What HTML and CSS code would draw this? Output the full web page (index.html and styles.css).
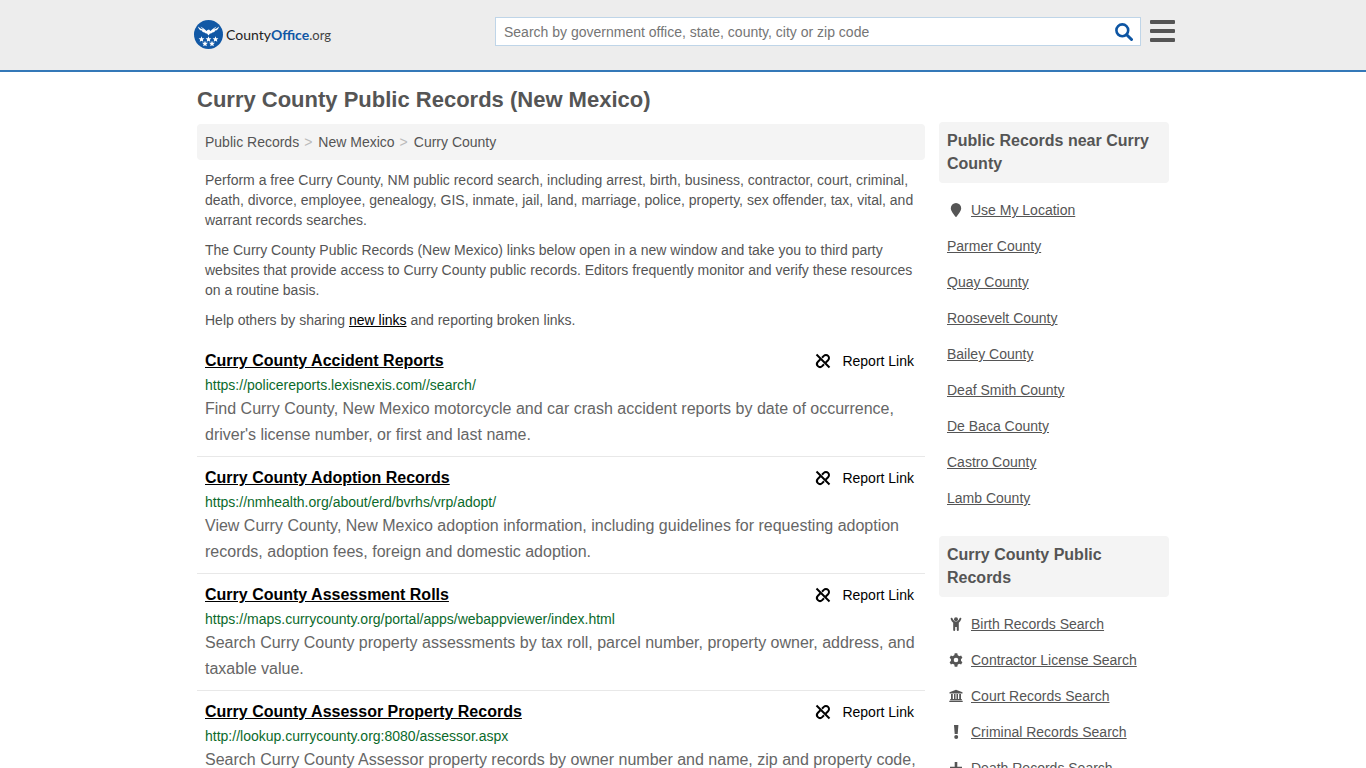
FILE: index.html
```
<!DOCTYPE html>
<html lang="en">
<head>
  <meta charset="UTF-8" />
  <meta name="viewport" content="width=device-width, initial-scale=1.0" />
  <title>Curry County Public Records (New Mexico)</title>
  <link rel="stylesheet" href="styles.css">
</head>
<body>

  <!-- shared icons -->
  <svg class="sprite" aria-hidden="true">
    <symbol id="unlink" viewBox="0 0 16 16">
      <g fill="none" stroke="currentColor" stroke-width="2" stroke-linecap="butt" stroke-linejoin="round">
        <path d="M1.500 1.500l13 13" />
        <path d="M7 4.700L8.800 2.900a3 3 0 0 1 4.300 4.300L10.600 9.700" />
        <path d="M9 11.300L7.200 13.100a3 3 0 0 1-4.300-4.300L5.400 6.300" />
      </g>
    </symbol>
  </svg>

  <header class="header">
    <div class="header-inner">
      <a class="logo" href="#" aria-label="CountyOffice.org">
        <svg class="logo-mark" viewBox="0 0 58 58" aria-hidden="true">
          <circle cx="29" cy="29" r="29" fill="#1158a5" />
          <g fill="#fff">
            <path d="M8 13c3 3 7 5 11 6-3-2-5-4-6-6 4 3 9 5 12 9l2-2 3-1 3 3c3-4 8-6 12-9-1 2-3 4-6 6 4-1 8-3 11-6-1 4-3 7-6 8h-2c0 2-2 4-5 4-2 2-4 2-5 2l-3 4-3-4c-1 0-3 0-5-2-3 0-5-2-5-4h-2c-3-1-5-4-6-8z" />
            <path id="star" d="M15 32.500l1.600 3.900 4.200.3-3.200 2.700 1 4.100-3.600-2.200-3.600 2.200 1-4.100-3.200-2.700 4.200-.3z" />
            <use href="#star" x="14" />
            <use href="#star" x="28" />
            <use href="#star" x="7" y="9" />
            <use href="#star" x="21" y="9" />
          </g>
        </svg>
        <span class="logo-text">County<b>Office</b><span class="logo-tld">.org</span></span>
      </a>
      <form class="search">
        <input type="text" aria-label="Search" placeholder="Search by government office, state, county, city or zip code" />
        <button type="submit" aria-label="Search">
          <svg viewBox="0 0 18 18" width="18" height="18"><circle cx="7.300" cy="7.300" r="5.900" fill="none" stroke="#0d55a3" stroke-width="2.600" /><path d="M11.700 11.700l4.800 4.800" stroke="#0d55a3" stroke-width="3" stroke-linecap="round" /></svg>
        </button>
      </form>
      <button class="menu" type="button" aria-label="Menu"><span></span><span></span><span></span></button>
    </div>
  </header>

  <div class="container">
    <main class="main">
      <h1>Curry County Public Records (New Mexico)</h1>
      <nav class="breadcrumbs">
        <a href="#">Public Records</a><i>&gt;</i><a href="#">New Mexico</a><i>&gt;</i><a href="#">Curry County</a>
      </nav>
      <div class="intro">
        <p>Perform a free Curry County, NM public record search, including arrest, birth, business, contractor, court, criminal, death, divorce, employee, genealogy, GIS, inmate, jail, land, marriage, police, property, sex offender, tax, vital, and warrant records searches.</p>
        <p>The Curry County Public Records (New Mexico) links below open in a new window and take you to third party websites that provide access to Curry County public records. Editors frequently monitor and verify these resources on a routine basis.</p>
        <p>Help others by sharing <a href="#">new links</a> and reporting broken links.</p>
      </div>

      <article class="record">
        <div class="record-head">
          <h2><a href="#">Curry County Accident Reports</a></h2>
          <a class="report" href="#"><svg width="16" height="16"><use href="#unlink" /></svg>Report Link</a>
        </div>
        <div class="record-url">https://policereports.lexisnexis.com//search/</div>
        <p>Find Curry County, New Mexico motorcycle and car crash accident reports by date of occurrence, driver's license number, or first and last name.</p>
      </article>

      <article class="record">
        <div class="record-head">
          <h2><a href="#">Curry County Adoption Records</a></h2>
          <a class="report" href="#"><svg width="16" height="16"><use href="#unlink" /></svg>Report Link</a>
        </div>
        <div class="record-url">https://nmhealth.org/about/erd/bvrhs/vrp/adopt/</div>
        <p>View Curry County, New Mexico adoption information, including guidelines for requesting adoption records, adoption fees, foreign and domestic adoption.</p>
      </article>

      <article class="record">
        <div class="record-head">
          <h2><a href="#">Curry County Assessment Rolls</a></h2>
          <a class="report" href="#"><svg width="16" height="16"><use href="#unlink" /></svg>Report Link</a>
        </div>
        <div class="record-url">https://maps.currycounty.org/portal/apps/webappviewer/index.html</div>
        <p>Search Curry County property assessments by tax roll, parcel number, property owner, address, and taxable value.</p>
      </article>

      <article class="record">
        <div class="record-head">
          <h2><a href="#">Curry County Assessor Property Records</a></h2>
          <a class="report" href="#"><svg width="16" height="16"><use href="#unlink" /></svg>Report Link</a>
        </div>
        <div class="record-url">http://lookup.currycounty.org:8080/assessor.aspx</div>
        <p>Search Curry County Assessor property records by owner number and name, zip and property code,</p>
      </article>
    </main>

    <aside class="sidebar">
      <h2>Public Records near Curry County</h2>
      <ul>
        <li><svg viewBox="0 0 14 14"><path d="M7 0a5.200 5.200 0 0 1 5.200 5.200C12.200 8 9 11.500 7.700 13.600a.8.8 0 0 1-1.400 0C5 11.500 1.800 8 1.800 5.200A5.200 5.200 0 0 1 7 0z" /></svg><a href="#">Use My Location</a></li>
        <li><a href="#">Parmer County</a></li>
        <li><a href="#">Quay County</a></li>
        <li><a href="#">Roosevelt County</a></li>
        <li><a href="#">Bailey County</a></li>
        <li><a href="#">Deaf Smith County</a></li>
        <li><a href="#">De Baca County</a></li>
        <li><a href="#">Castro County</a></li>
        <li><a href="#">Lamb County</a></li>
      </ul>

      <h2>Curry County Public Records</h2>
      <ul>
        <li><svg viewBox="0 0 14 14"><circle cx="7" cy="2.200" r="2" /><path d="M2.100.8a.9.900 0 0 1 1.200.3C4 2.700 5 4.600 7 4.600s3-1.900 3.700-3.500a.9.900 0 0 1 1.600.8C11.600 3.500 10.900 4.900 9.800 5.700V13a1 1 0 0 1-2 0v-3H6.200v3a1 1 0 0 1-2 0V5.700C3.100 4.900 2.400 3.500 1.700 1.900a.9.900 0 0 1 .4-1.100z" /></svg><a href="#">Birth Records Search</a></li>
        <li><svg viewBox="0 0 14 14"><circle cx="7" cy="7" r="3.700" fill="none" stroke="#555" stroke-width="2.800" /><path d="M5.700.3h2.600l.5 2.400H5.200zM5.700 13.700h2.600l.5-2.400H5.200zM12.100 2.600l1.300 2.200-1.800 1.700-1.800-3.100zM1.900 2.600L.6 4.800l1.800 1.700 1.800-3.100zM12.100 11.400l1.300-2.200-1.800-1.700-1.800 3.100zM1.900 11.400L.6 9.200l1.800-1.700 1.800 3.100z" /></svg><a href="#">Contractor License Search</a></li>
        <li><svg viewBox="0 0 14 14"><path d="M7 .8l6.500 2.400v1.300H.5V3.200zM2 5h1.800v5.500H2zM5 5h1.500v5.500H5zM7.500 5H9v5.500H7.500zM10.200 5H12v5.500h-1.800zM1.200 10h11.600v1.300H1.200zM.3 11.700h13.400v1.300H.3z" /></svg><a href="#">Court Records Search</a></li>
        <li><svg viewBox="0 0 14 14"><path d="M5 0h4.400l-.7 9H5.700z" /><circle cx="7.200" cy="12" r="2" /></svg><a href="#">Criminal Records Search</a></li>
        <li><svg viewBox="0 0 14 14"><path d="M5.700 1h2.600v4.700H13v2.600H8.300V13H5.700V8.300H1V5.700h4.700z" /></svg><a href="#">Death Records Search</a></li>
      </ul>
    </aside>
  </div>

</body>
</html>
```
FILE: styles.css
```
* {
  box-sizing: border-box;
}

body {
  margin: 0;
  font-family: "Liberation Sans", Arial, sans-serif;
  font-size: 14px;
  line-height: 20px;
  color: #555;
  background: #fff;
}

h1, h2, p, ul {
  margin: 0;
  padding: 0;
}

a {
  color: inherit;
}

.sprite {
  display: none;
}

.header {
  background: #ededed;
  border-bottom: 2px solid #3478b8;
}

.header-inner {
  display: flex;
  align-items: flex-start;
  max-width: 984px;
  margin: 0 auto;
  padding: 17px 0 21px 3px;
}

.logo {
  display: flex;
  align-items: center;
  gap: 3px;
  width: 301px;
  padding-top: 3px;
  text-decoration: none;
}

.logo-mark {
  width: 29px;
  height: 29px;
}

.logo-text {
  font-family: Lato, sans-serif;
  font-size: 14px;
  color: #222;
}

.logo-text b {
  color: #1158a5;
}

.logo-tld {
  font-size: 13px;
  color: #444;
}

.search {
  display: flex;
  flex: 1;
  height: 29px;
  background: #fff;
  border: 1px solid #bfd5e8;
}

.search input {
  flex: 1;
  min-width: 0;
  padding: 0 8px;
  border: none;
  outline: none;
  background: none;
  font-family: inherit;
  font-size: 14px;
  color: #555;
}

.search input::placeholder {
  color: #757575;
}

.search button {
  display: flex;
  align-items: center;
  padding: 0 7px;
  border: none;
  background: none;
  cursor: pointer;
}

.menu {
  display: flex;
  flex-direction: column;
  gap: 5px;
  margin-left: 9px;
  padding: 3px 0;
  border: none;
  background: none;
  cursor: pointer;
}

.menu span {
  width: 25px;
  height: 4px;
  border-radius: 1px;
  background: #555;
}

.container {
  display: flex;
  gap: 14px;
  max-width: 972px;
  margin: 0 auto;
}

.main {
  flex: 1;
  min-width: 0;
  padding-top: 14px;
}

h1 {
  margin-bottom: 10px;
  font-size: 22px;
  line-height: 28px;
}

.breadcrumbs {
  padding: 8px;
  border-radius: 4px;
  background: #f4f4f4;
}

.breadcrumbs a {
  text-decoration: none;
}

.breadcrumbs i {
  padding: 0 6px 0 5px;
  font-style: normal;
  color: #bbb;
}

.intro {
  padding: 10px 8px 0;
}

.intro p {
  margin-bottom: 10px;
}

.intro a {
  color: #000;
}

.record {
  padding: 8px;
  border-bottom: 1px solid #e8e8e8;
}

.record-head {
  display: flex;
  justify-content: space-between;
  line-height: 26px;
}

.record-head h2 {
  font-size: 16px;
  color: #000;
}

.report {
  display: flex;
  align-items: center;
  gap: 11px;
  padding-right: 3px;
  color: #000;
  text-decoration: none;
}

.record-url {
  line-height: 22px;
  color: #0b6a2b;
}

.record p {
  font-size: 16px;
  line-height: 26px;
  color: #666;
}

.sidebar {
  width: 230px;
  padding-top: 50px;
}

.sidebar h2 {
  padding: 7px 8px 8px;
  border-radius: 4px;
  background: #f4f4f4;
  font-size: 16px;
  line-height: 23px;
}

.sidebar ul {
  padding: 9px 8px 8px;
  margin-bottom: 12px;
  list-style: none;
}

.sidebar li {
  display: flex;
  align-items: center;
  height: 36px;
}

.sidebar svg {
  width: 14px;
  height: 14px;
  margin: 0 8px 0 2px;
  fill: #555;
}
```
